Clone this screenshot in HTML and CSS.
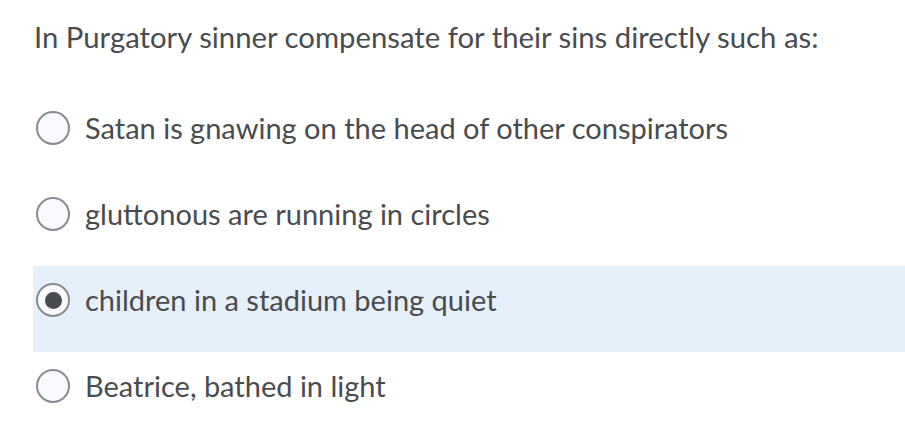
FILE: index.html
```html
<!DOCTYPE html>
<html>
<head>
<meta charset="utf-8">
<link rel="stylesheet" href="styles.css">
</head>
<body>
<div class="question">
  <p class="prompt">In Purgatory sinner compensate for their sins directly such as:</p>
  <div class="options">
    <label class="option"><span class="radio"></span><span class="text">Satan is gnawing on the head of other conspirators</span></label>
    <label class="option"><span class="radio"></span><span class="text">gluttonous are running in circles</span></label>
    <label class="option selected"><span class="radio checked"></span><span class="text">children in a stadium being quiet</span></label>
    <label class="option"><span class="radio"></span><span class="text">Beatrice, bathed in light</span></label>
  </div>
</div>
</body>
</html>
```

FILE: styles.css
```css
html, body {
  margin: 0;
  padding: 0;
  background: #ffffff;
}
body {
  font-family: Lato, "Noto Sans", sans-serif;
  color: #494c4e;
}
.question {
  padding: 0 0 0 33px;
}
.prompt {
  margin: 0;
  padding: 20px 0 0 1px;
  font-size: 29.3px;
  line-height: 34px;
  height: 94px;
  box-sizing: border-box;
}
.options {
  display: flex;
  flex-direction: column;
}
.option {
  display: flex;
  align-items: flex-start;
  height: 86px;
  box-sizing: border-box;
  padding: 17px 0 0 3px;
  gap: 15px;
  font-size: 29px;
  line-height: 34px;
}
.option.selected {
  background: #e6f0fa;
}
.radio {
  width: 34px;
  height: 34px;
  border: 2px solid #878c90;
  border-radius: 50%;
  background: #f9fafe;
  box-sizing: border-box;
  display: flex;
  align-items: center;
  justify-content: center;
  flex: none;
}
.radio.checked {
  background: #f9fafe;
}
.radio.checked::after {
  content: "";
  width: 17px;
  height: 17px;
  border-radius: 50%;
  background: #494c4e;
}
```
